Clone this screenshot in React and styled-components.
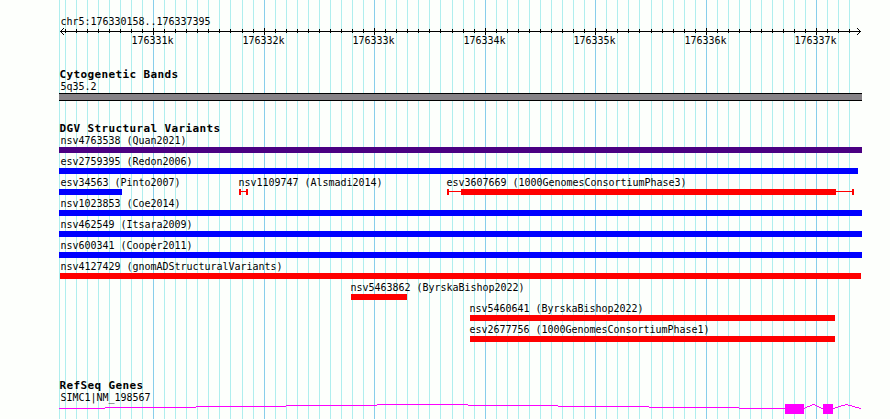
import React from "react";
import styled, { createGlobalStyle } from "styled-components";

const GlobalStyle = createGlobalStyle`
  * { box-sizing: border-box; }
  body { margin: 0; background: #fdfffc; }
`;

const LEFT = 59;
const COLORS = { gain: "#0000ff", loss: "#ff0000", complex: "#4b0082", gene: "#ff00ff" };

const Page = styled.main`
  position: relative;
  width: 890px;
  height: 419px;
  overflow: hidden;
  background: #fdfffc;
  color: #000;
  font-family: "DejaVu Sans Mono", "Liberation Mono", monospace;
`;

const GridLayer = styled.svg`
  position: absolute;
  inset: 0;
  shape-rendering: crispEdges;
`;

const Tracks = styled.div`
  position: relative;
  display: flex;
  flex-direction: column;
  width: 803px;
  margin-left: ${LEFT}px;
`;

const Label = styled.div`
  height: 11px;
  padding-left: 1.5px;
  font-size: 10px;
  line-height: 11px;
  letter-spacing: -0.02px;
  white-space: pre;
  transform: scaleY(1.08);
  transform-origin: 0 9px;
`;

const Title = styled.h2`
  height: 12px;
  margin: 0;
  padding-left: 0.5px;
  font-size: 11px;
  font-weight: 700;
  line-height: 12px;
  letter-spacing: 0.38px;
  white-space: pre;
`;

const Ruler = styled.section`
  height: 68px;
  padding-top: 16px;
`;

const Axis = styled.svg`
  display: block;
  width: 803px;
  height: 8px;
  shape-rendering: crispEdges;
`;

const TickLabels = styled.div`
  display: flex;
  padding-left: 72.5px;
`;

const TickLabel = styled(Label)`
  width: 42px;
  padding: 0;
  margin-right: ${(p) => p.$gap}px;
`;

const Track = styled.section`
  height: ${(p) => p.$height}px;
  padding-top: 1px;
`;

const Band = styled.div`
  height: 8px;
  margin-top: 1px;
  border: solid #000;
  border-width: 1px 0;
  background: #868286;
`;

const Row = styled.div`
  display: flex;
  height: 21px;
`;

const Feature = styled.div`
  flex: none;
  width: ${(p) => p.$width}px;
  margin-left: ${(p) => p.$offset}px;
`;

const Glyph = styled.div`
  display: flex;
  align-items: center;
  height: 6px;
  margin-top: 1px;
  color: ${(p) => p.$color};
`;

const Bar = styled.div`
  flex: 1;
  height: 6px;
  background: currentColor;
`;

const Cap = styled.div`
  width: 2px;
  height: 6px;
  background: currentColor;
`;

const Whisker = styled.div`
  width: ${(p) => p.$width}px;
  height: 1px;
  align-self: flex-start;
  margin-top: 2px;
  background: currentColor;
`;

const Gene = styled.svg`
  display: block;
  width: 803px;
  height: 16px;
  shape-rendering: crispEdges;
`;

const ticks = Array.from({ length: 72 }, (_, i) => {
  const bp = 330200 + i * 100;
  return { x: Math.floor(60.5 + ((bp - 330158) * 800) / 7237), major: bp % 1000 === 0 };
});

const tickLabels = [
  ["176331k", 69], ["176332k", 68], ["176333k", 69], ["176334k", 68],
  ["176335k", 69], ["176336k", 68], ["176337k", 0],
];

const rows = [
  [{ label: "nsv4763538 (Quan2021)", start: 59, end: 862, color: COLORS.complex }],
  [{ label: "esv2759395 (Redon2006)", start: 59, end: 858, color: COLORS.gain }],
  [
    { label: "esv34563 (Pinto2007)", start: 59, end: 122, color: COLORS.gain },
    { label: "nsv1109747 (Alsmadi2014)", start: 239, end: 248, color: COLORS.loss, whiskers: [5] },
    { label: "esv3607669 (1000GenomesConsortiumPhase3)", start: 447, end: 854, color: COLORS.loss, whiskers: [12, 16] },
  ],
  [{ label: "nsv1023853 (Coe2014)", start: 59, end: 862, color: COLORS.gain }],
  [{ label: "nsv462549 (Itsara2009)", start: 59, end: 862, color: COLORS.gain }],
  [{ label: "nsv600341 (Cooper2011)", start: 59, end: 862, color: COLORS.gain }],
  [{ label: "nsv4127429 (gnomADStructuralVariants)", start: 60, end: 861, color: COLORS.loss }],
  [{ label: "nsv5463862 (ByrskaBishop2022)", start: 351, end: 407, color: COLORS.loss }],
  [{ label: "nsv5460641 (ByrskaBishop2022)", start: 470, end: 835, color: COLORS.loss }],
  [{ label: "esv2677756 (1000GenomesConsortiumPhase1)", start: 470, end: 835, color: COLORS.loss }],
];

const FeatureLabel = styled(Label)`
  padding-left: 0;
  margin-left: ${(p) => p.$shift}px;
`;

function VariantGlyph({ feature }) {
  const { color, whiskers } = feature;
  if (!whiskers) return <Glyph $color={color}><Bar /></Glyph>;
  return (
    <Glyph $color={color}>
      <Cap />
      <Whisker $width={whiskers[0]} />
      {whiskers.length > 1 && <><Bar /><Whisker $width={whiskers[1]} /></>}
      <Cap />
    </Glyph>
  );
}

function VariantRow({ features }) {
  return (
    <Row>
      {features.map((f, i) => (
        <Feature key={f.label} $width={f.end - f.start} $offset={f.start - (i ? features[i - 1].end : LEFT)}>
          <FeatureLabel $shift={f.start === 59 ? 1.5 : f.start === 60 ? 0.5 : -0.5}>{f.label}</FeatureLabel>
          <VariantGlyph feature={f} />
        </Feature>
      ))}
    </Row>
  );
}

const geneSteps = [
  [59, 105, 408], [105, 196, 407], [196, 286, 406], [286, 377, 405], [377, 468, 404],
  [468, 558, 405], [558, 649, 406], [649, 739, 407], [739, 785, 408],
  [804, 805, 408], [805, 807, 407], [807, 810, 406], [810, 812, 405], [812, 815, 404],
  [815, 817, 405], [817, 819, 406], [819, 821, 407], [821, 823, 408],
  [833, 835, 408], [835, 838, 407], [838, 841, 406], [841, 845, 405], [845, 848, 404],
  [848, 852, 405], [852, 855, 406], [855, 859, 407], [859, 861, 408],
];

export default function App() {
  return (
    <>
      <GlobalStyle />
      <Page>
        <GridLayer width="890" height="419">
          <rect x="59" width="1" height="419" fill="#afeeee" />
          {ticks.map((t) => (
            <rect key={t.x} x={t.x} width="1" height="419" fill={t.major ? "#87ceeb" : "#afeeee"} />
          ))}
        </GridLayer>
        <Tracks>
          <Ruler>
            <Label>chr5:176330158..176337395</Label>
            <Axis viewBox="59 27 803 8">
              <rect x="60" y="31" width="801" height="1" />
              {ticks.map((t) => (
                <rect key={t.x} x={t.x} y={t.major ? 28 : 29} width="1" height={t.major ? 7 : 4} />
              ))}
              {[1, 2, 3].map((d) => (
                <g key={d}>
                  <rect x={60 + d} y={31 - d} width="1" height="1" />
                  <rect x={60 + d} y={31 + d} width="1" height="1" />
                  <rect x={860 - d} y={31 - d} width="1" height="1" />
                  <rect x={860 - d} y={31 + d} width="1" height="1" />
                </g>
              ))}
            </Axis>
            <TickLabels>
              {tickLabels.map(([text, gap]) => <TickLabel key={text} $gap={gap}>{text}</TickLabel>)}
            </TickLabels>
          </Ruler>
          <Track $height={54}>
            <Title>Cytogenetic Bands</Title>
            <Label>5q35.2</Label>
            <Band />
          </Track>
          <Track $height={257}>
            <Title>DGV Structural Variants</Title>
            <div>{rows.map((features) => <VariantRow key={features[0].label} features={features} />)}</div>
          </Track>
          <Track $height={40}>
            <Title>RefSeq Genes</Title>
            <Label>SIMC1|NM_198567</Label>
            <Gene viewBox="59 403 803 16" fill={COLORS.gene}>
              {geneSteps.map(([a, b, y]) => <rect key={a} x={a} y={y} width={b - a} height="1" />)}
              <rect x="785" y="404" width="19" height="10" />
              <rect x="823" y="404" width="10" height="10" />
            </Gene>
          </Track>
        </Tracks>
      </Page>
    </>
  );
}
